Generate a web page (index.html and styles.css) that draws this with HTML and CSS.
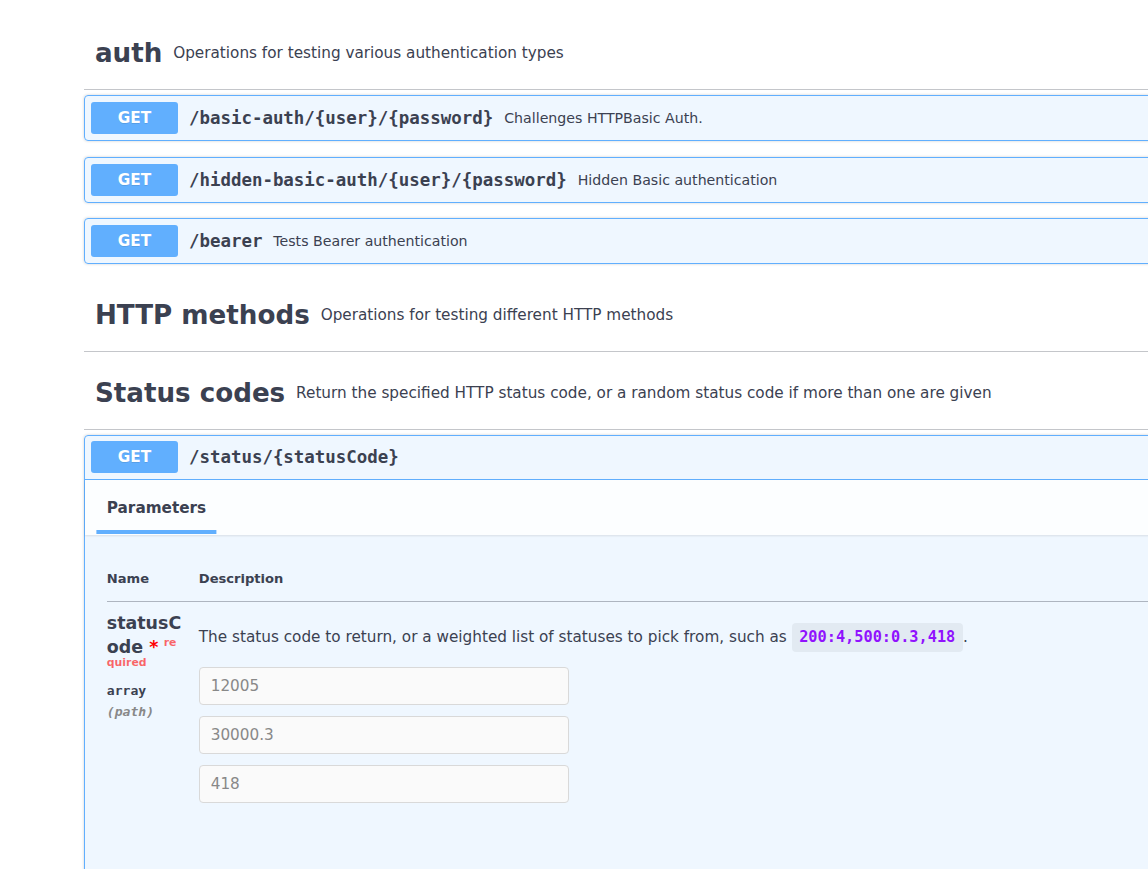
FILE: index.html
```html
<!DOCTYPE html>
<html lang="en">
<head>
<meta charset="utf-8">
<title>httpbin operations</title>
<link rel="stylesheet" href="styles.css">
</head>
<body>
<div class="page">
  <section class="tag-section">
    <h3 class="tag"><span class="tag-name">auth</span><small class="tag-desc">Operations for testing various authentication types</small></h3>
    <div class="opblock">
      <div class="summary"><span class="method">GET</span><span class="path">/basic-auth/{user}/{password}</span><span class="summary-desc">Challenges HTTPBasic Auth.</span></div>
    </div>
    <div class="opblock">
      <div class="summary"><span class="method">GET</span><span class="path">/hidden-basic-auth/{user}/{password}</span><span class="summary-desc">Hidden Basic authentication</span></div>
    </div>
    <div class="opblock">
      <div class="summary"><span class="method">GET</span><span class="path">/bearer</span><span class="summary-desc">Tests Bearer authentication</span></div>
    </div>
  </section>

  <section class="tag-section">
    <h3 class="tag"><span class="tag-name">HTTP methods</span><small class="tag-desc">Operations for testing different HTTP methods</small></h3>
  </section>

  <section class="tag-section">
    <h3 class="tag"><span class="tag-name">Status codes</span><small class="tag-desc">Return the specified HTTP status code, or a random status code if more than one are given</small></h3>
    <div class="opblock open">
      <div class="summary"><span class="method">GET</span><span class="path">/status/{statusCode}</span></div>
      <div class="op-body">
        <div class="section-header">
          <div class="tab">Parameters</div>
        </div>
        <div class="table-container">
          <table class="params">
            <thead>
              <tr><th class="col-name">Name</th><th class="col-desc">Description</th></tr>
            </thead>
            <tbody>
              <tr>
                <td class="col-name">
                  <div class="param-name">statusCode<span class="req">&nbsp;*</span></div>
                  <div class="param-type">array</div>
                  <div class="param-in">(path)</div>
                </td>
                <td class="col-desc">
                  <p class="md">The status code to return, or a weighted list of statuses to pick from, such as <code>200:4,500:0.3,418</code>.</p>
                  <div class="inputs">
                    <input class="param-input" type="text" value="12005" disabled>
                    <input class="param-input" type="text" value="30000.3" disabled>
                    <input class="param-input" type="text" value="418" disabled>
                  </div>
                </td>
              </tr>
            </tbody>
          </table>
        </div>
      </div>
    </div>
  </section>
</div>
</body>
</html>
```
FILE: styles.css
```css
html, body {
  margin: 0;
  overflow: hidden;
  background: #fff;
}

body {
  font-family: "DejaVu Sans", sans-serif;
  color: #3b4151;
}

.page {
  width: 1300px;
  padding: 17px 0 0 84px;
}

.tag {
  display: flex;
  align-items: center;
  box-sizing: border-box;
  height: 73px;
  margin: 0 0 5px;
  padding: 10.9px 21.8px 10.9px 10.9px;
  border-bottom: 1px solid rgba(59, 65, 81, 0.3);
  font-size: 26.16px;
  font-weight: 700;
}

.tag-desc {
  flex: 1;
  padding: 0 10.9px;
  font-size: 15.26px;
  font-weight: 400;
}

.opblock {
  margin: 0 0 15.5px;
  border: 1px solid #61affe;
  border-radius: 4px;
  background: rgba(97, 175, 254, 0.1);
  box-shadow: 0 0 3px rgba(0, 0, 0, 0.19);
}

.opblock:last-child {
  margin-bottom: 14.5px;
}

.summary {
  display: flex;
  align-items: center;
  padding: 6px;
}

.open .summary {
  padding: 5.5px 6px;
  border-bottom: 1px solid #61affe;
}

.method {
  flex: none;
  display: flex;
  align-items: center;
  justify-content: center;
  width: 87px;
  height: 32px;
  border-radius: 3px;
  background: #61affe;
  color: #fff;
  font-size: 15.26px;
  font-weight: 700;
  text-shadow: 0 1px 0 rgba(0, 0, 0, 0.1);
}

.path {
  padding: 0 10.9px;
  font-family: "DejaVu Sans Mono", monospace;
  font-size: 17.44px;
  font-weight: 700;
}

.summary-desc {
  font-size: 14.17px;
}

.op-body {
  padding-bottom: 80px;
}

.section-header {
  display: flex;
  align-items: flex-start;
  box-sizing: border-box;
  height: 55px;
  padding: 19px 21.8px 0;
  background: rgba(255, 255, 255, 0.8);
  box-shadow: 0 1px 2px rgba(0, 0, 0, 0.1);
}

.tab {
  position: relative;
  line-height: 18px;
  font-size: 15.26px;
  font-weight: 700;
}

.tab::after {
  content: "";
  position: absolute;
  top: 31px;
  left: 50%;
  width: 120%;
  height: 4px;
  background: #61affe;
  transform: translateX(-50%);
}

.table-container {
  padding: 21.8px;
}

.params {
  width: 100%;
  border-collapse: collapse;
}

.params th {
  padding: 15px 0 15px;
  border-bottom: 1px solid rgba(59, 65, 81, 0.2);
  text-align: left;
  font-size: 13.08px;
  font-weight: 700;
}

.params th.col-name {
  width: 92px;
}

.params td {
  padding: 10.9px 0;
  vertical-align: top;
}

.params td.col-name {
  box-sizing: border-box;
  width: 92px;
  padding-right: 16px;
}

.param-name {
  width: 76px;
  font-size: 17.44px;
  font-weight: 700;
  word-break: break-all;
}

.req {
  display: inline-block;
  padding-top: 4px;
  color: red;
}

.param-name::after {
  content: "required";
  position: relative;
  top: -6.5px;
  padding: 5.45px;
  color: rgba(255, 0, 0, 0.6);
  font-size: 10.9px;
}

.param-type {
  padding: 5.45px 0;
  font-family: "DejaVu Sans Mono", monospace;
  font-size: 13.08px;
  font-weight: 700;
}

.param-in {
  padding-top: 1px;
  color: #888;
  font-family: "DejaVu Sans Mono", monospace;
  font-size: 13.08px;
  font-style: italic;
  font-weight: 700;
}

.md {
  margin: 15.26px 0;
  font-size: 15.26px;
}

.md code {
  padding: 5.45px 7.6px;
  border-radius: 4px;
  background: rgba(0, 0, 0, 0.05);
  color: #9012fe;
  font-family: "DejaVu Sans Mono", monospace;
  font-size: 15.26px;
  font-weight: 700;
}

.inputs {
  display: flex;
  flex-direction: column;
  align-items: flex-start;
}

.param-input {
  box-sizing: border-box;
  width: 370px;
  height: 38px;
  margin: 5.45px 0;
  padding: 0 10.9px;
  border: 1px solid #d9d9d9;
  border-radius: 4px;
  background: #fafafa;
  color: #888;
  font-family: "DejaVu Sans", sans-serif;
  font-size: 15.26px;
}
```
